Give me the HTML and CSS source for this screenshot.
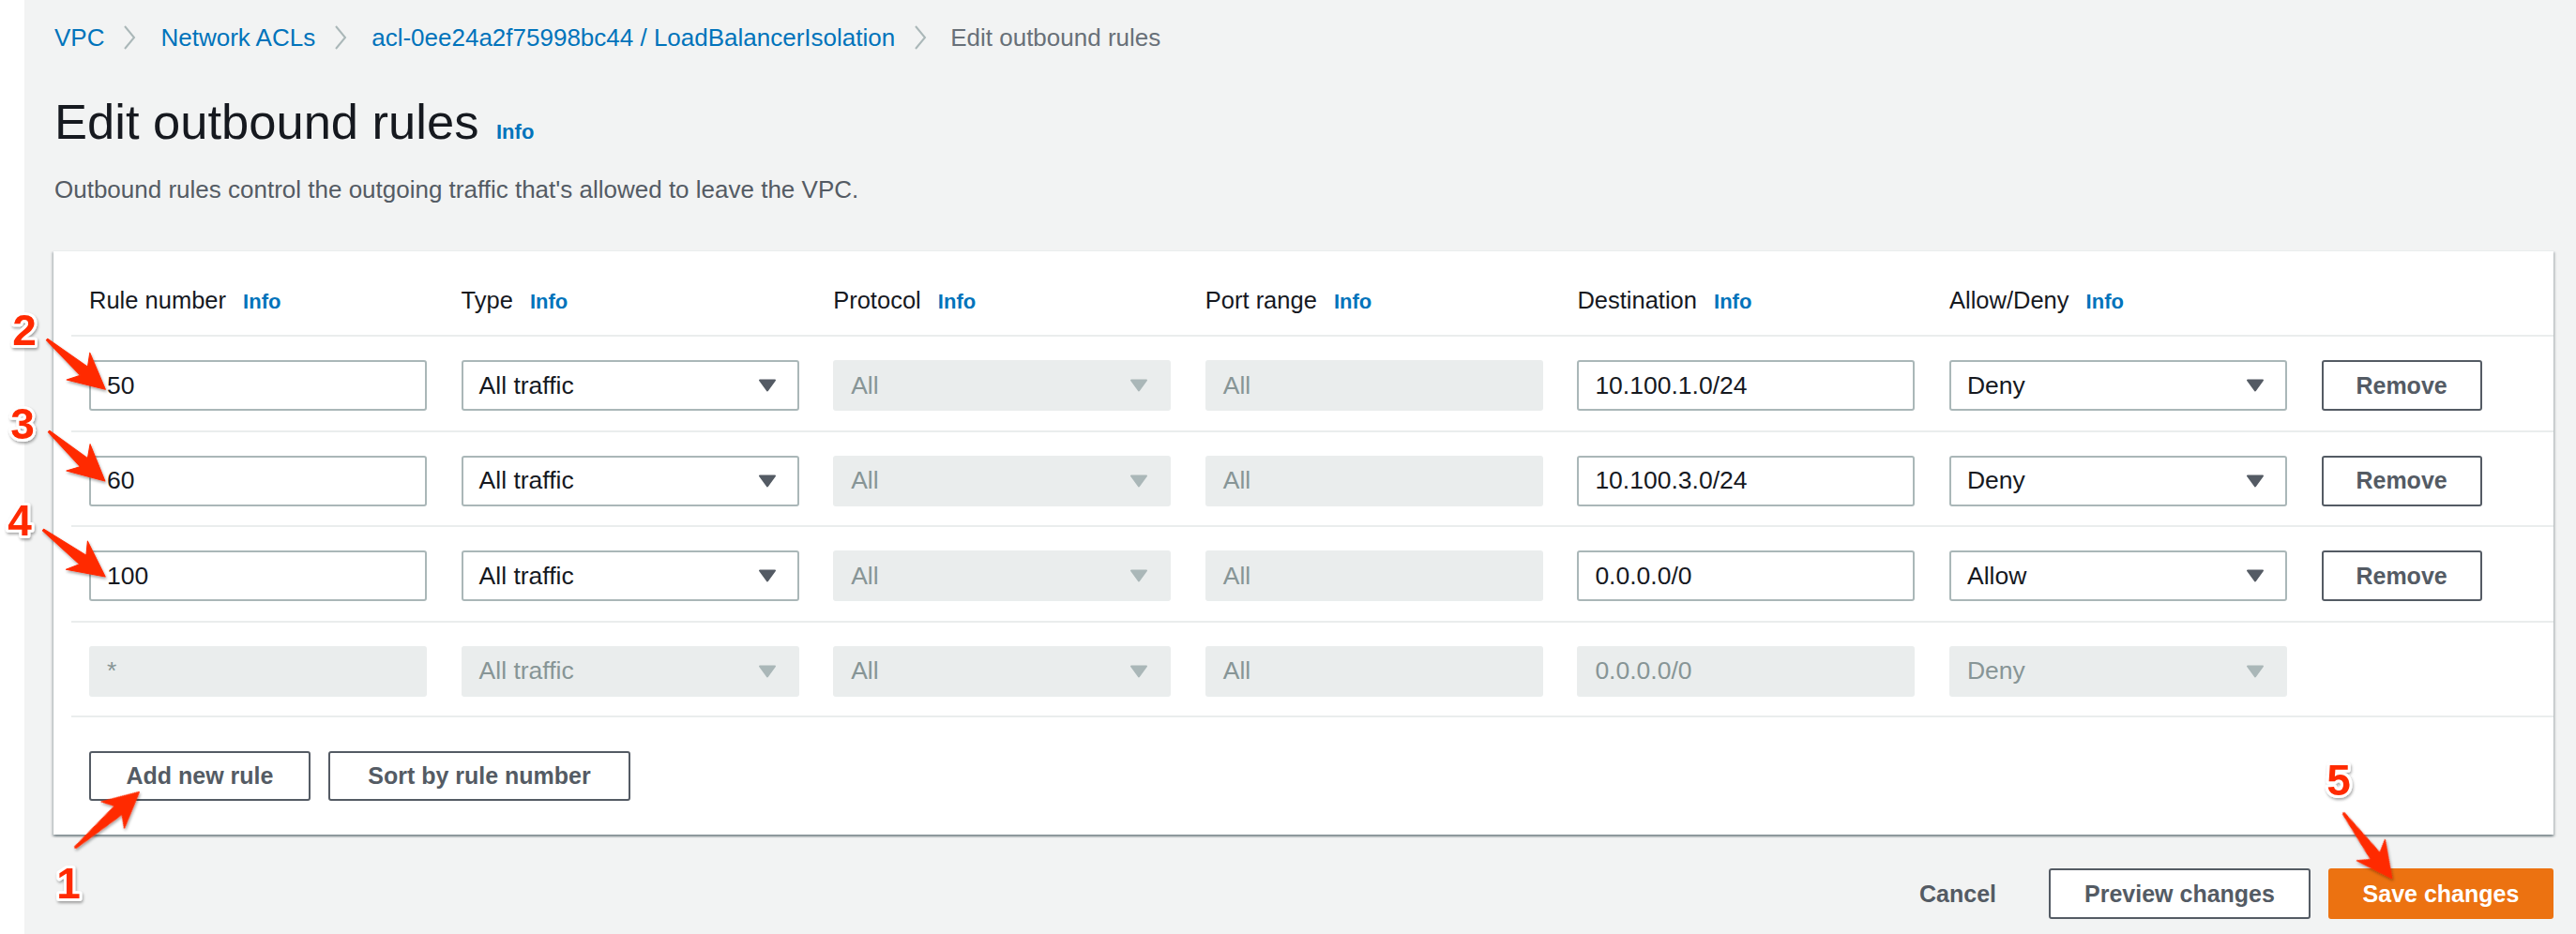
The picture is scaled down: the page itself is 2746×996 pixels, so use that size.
FILE: index.html
```html
<!DOCTYPE html>
<html lang="en">
<head>
<meta charset="utf-8">
<title>Edit outbound rules</title>
<link rel="stylesheet" href="styles.css">
</head>
<body>
<div class="app">
  <div class="nav-strip"></div>
  <main class="main">
    <nav class="breadcrumb">
      <a class="crumb-link">VPC</a>
      <svg class="chev" viewBox="0 0 14 26"><polyline points="2,1 12,13 2,25"/></svg>
      <a class="crumb-link">Network ACLs</a>
      <svg class="chev" viewBox="0 0 14 26"><polyline points="2,1 12,13 2,25"/></svg>
      <a class="crumb-link">acl-0ee24a2f75998bc44 / LoadBalancerIsolation</a>
      <svg class="chev" viewBox="0 0 14 26"><polyline points="2,1 12,13 2,25"/></svg>
      <span class="crumb-current">Edit outbound rules</span>
    </nav>

    <h1 class="page-title">Edit outbound rules <a class="info info-title">Info</a></h1>
    <p class="page-desc">Outbound rules control the outgoing traffic that's allowed to leave the VPC.</p>

    <section class="card">
      <div class="rules">
        <div class="row head-row">
          <div class="label">Rule number <a class="info">Info</a></div>
          <div class="label">Type <a class="info">Info</a></div>
          <div class="label">Protocol <a class="info">Info</a></div>
          <div class="label">Port range <a class="info">Info</a></div>
          <div class="label">Destination <a class="info">Info</a></div>
          <div class="label">Allow/Deny <a class="info">Info</a></div>
          <div></div>
        </div>

        <div class="row">
          <div class="field">50</div>
          <div class="field select">All traffic<svg class="caret" viewBox="0 0 20 14"><path d="M2 1.5 H18 L10 12.5 Z"/></svg></div>
          <div class="field select disabled">All<svg class="caret" viewBox="0 0 20 14"><path d="M2 1.5 H18 L10 12.5 Z"/></svg></div>
          <div class="field disabled">All</div>
          <div class="field">10.100.1.0/24</div>
          <div class="field select">Deny<svg class="caret" viewBox="0 0 20 14"><path d="M2 1.5 H18 L10 12.5 Z"/></svg></div>
          <button class="btn">Remove</button>
        </div>

        <div class="row">
          <div class="field">60</div>
          <div class="field select">All traffic<svg class="caret" viewBox="0 0 20 14"><path d="M2 1.5 H18 L10 12.5 Z"/></svg></div>
          <div class="field select disabled">All<svg class="caret" viewBox="0 0 20 14"><path d="M2 1.5 H18 L10 12.5 Z"/></svg></div>
          <div class="field disabled">All</div>
          <div class="field">10.100.3.0/24</div>
          <div class="field select">Deny<svg class="caret" viewBox="0 0 20 14"><path d="M2 1.5 H18 L10 12.5 Z"/></svg></div>
          <button class="btn">Remove</button>
        </div>

        <div class="row">
          <div class="field">100</div>
          <div class="field select">All traffic<svg class="caret" viewBox="0 0 20 14"><path d="M2 1.5 H18 L10 12.5 Z"/></svg></div>
          <div class="field select disabled">All<svg class="caret" viewBox="0 0 20 14"><path d="M2 1.5 H18 L10 12.5 Z"/></svg></div>
          <div class="field disabled">All</div>
          <div class="field">0.0.0.0/0</div>
          <div class="field select">Allow<svg class="caret" viewBox="0 0 20 14"><path d="M2 1.5 H18 L10 12.5 Z"/></svg></div>
          <button class="btn">Remove</button>
        </div>

        <div class="row">
          <div class="field disabled">*</div>
          <div class="field select disabled">All traffic<svg class="caret" viewBox="0 0 20 14"><path d="M2 1.5 H18 L10 12.5 Z"/></svg></div>
          <div class="field select disabled">All<svg class="caret" viewBox="0 0 20 14"><path d="M2 1.5 H18 L10 12.5 Z"/></svg></div>
          <div class="field disabled">All</div>
          <div class="field disabled">0.0.0.0/0</div>
          <div class="field select disabled">Deny<svg class="caret" viewBox="0 0 20 14"><path d="M2 1.5 H18 L10 12.5 Z"/></svg></div>
          <div></div>
        </div>
      </div>

      <div class="card-actions">
        <button class="btn">Add new rule</button>
        <button class="btn">Sort by rule number</button>
      </div>
    </section>

    <div class="page-actions">
      <button class="btn btn-link">Cancel</button>
      <button class="btn">Preview changes</button>
      <button class="btn btn-primary">Save changes</button>
    </div>
  </main>
</div>

<svg class="annotations" viewBox="0 0 2746 996" width="2746" height="996">
  <defs>
    <filter id="shadow" x="-30%" y="-30%" width="160%" height="160%">
      <feDropShadow dx="1" dy="2" stdDeviation="1.5" flood-color="#000" flood-opacity="0.35"/>
    </filter>
  </defs>
  <g class="arrows" filter="url(#shadow)">
    <polygon transform="translate(50,362) rotate(40.5)" points="0,-1 52,-6 44,-19 82,0 44,19 52,6 0,1"/>
    <polygon transform="translate(52,460) rotate(41.5)" points="0,-1 50,-6 42,-19 80,0 42,19 50,6 0,1"/>
    <polygon transform="translate(46,565) rotate(37.1)" points="0,-1 53,-6 45,-19 83,0 45,19 53,6 0,1"/>
    <polygon transform="translate(80,904) rotate(-41)" points="0,-1 61,-6 53,-19 91,0 53,19 61,6 0,1"/>
    <polygon transform="translate(2498,867) rotate(53.4)" points="0,-1 57,-6 49,-19 87,0 49,19 57,6 0,1"/>
  </g>
  <g class="nums" filter="url(#shadow)">
    <text x="26" y="368">2</text>
    <text x="24" y="468">3</text>
    <text x="21" y="571">4</text>
    <text x="73" y="958">1</text>
    <text x="2493" y="848">5</text>
  </g>
</svg>
</body>
</html>
```

FILE: styles.css
```css
* { box-sizing: border-box; }

html, body {
  margin: 0;
  padding: 0;
  width: 2746px;
  height: 996px;
  overflow: hidden;
}

body {
  background: #f2f3f3;
  font-family: "Liberation Sans", Arial, sans-serif;
  font-size: 25px;
  color: #16191f;
  position: relative;
}

.app {
  display: flex;
  height: 996px;
}

.nav-strip {
  width: 26px;
  flex: 0 0 26px;
  background: #ffffff;
}

.main {
  flex: 1;
  padding: 25px 24px 0 31px;
}

/* Breadcrumb */
.breadcrumb {
  display: flex;
  align-items: center;
  height: 30px;
  font-size: 26px;
  line-height: 30px;
}

.crumb-link {
  color: #0073bb;
  padding-left: 1px;
}

.crumb-current {
  color: #687078;
}

.chev {
  width: 14px;
  height: 26px;
  margin: 0 25px 0 20px;
}

.chev polyline {
  fill: none;
  stroke: #aab7b8;
  stroke-width: 2;
}

/* Heading */
.page-title {
  margin: 45px 0 0 0;
  font-size: 52.5px;
  line-height: 60px;
  font-weight: 400;
  color: #16191f;
  padding-left: 1px;
}

.info {
  color: #0073bb;
  font-weight: 700;
  font-size: 22px;
  line-height: 1;
}

.info-title {
  margin-left: 4px;
}

.page-desc {
  margin: 26px 0 0 0;
  font-size: 26px;
  line-height: 32px;
  color: #545b64;
  padding-left: 1px;
}

/* Card */
.card {
  margin-top: 49px;
  background: #ffffff;
  border-top: 1px solid #eaeded;
  box-shadow: 0 2px 2px 0 rgba(0, 28, 36, 0.3),
              2px 2px 2px 0 rgba(0, 28, 36, 0.15),
              -2px 2px 2px 0 rgba(0, 28, 36, 0.15);
}

.rules {
  padding-left: 19px;
}

.row {
  display: grid;
  grid-template-columns: repeat(6, 360px) 171px;
  column-gap: 36.6px;
  align-items: center;
  padding: 25px 0 20.5px 19px;
  border-bottom: 2px solid #eaeded;
}

.head-row {
  padding: 37px 0 22px 19px;
}

.label {
  line-height: 30px;
  font-size: 25.5px;
  color: #16191f;
  white-space: nowrap;
}

.label .info {
  margin-left: 11px;
}

.field {
  position: relative;
  height: 54px;
  border: 2px solid #aab7b8;
  border-radius: 3px;
  background: #ffffff;
  padding: 0 17px;
  display: flex;
  align-items: center;
  font-size: 26.5px;
  color: #16191f;
  white-space: nowrap;
}

.field.select {
  justify-content: space-between;
  padding-right: 22px;
}

.field.disabled {
  background: #eaeded;
  border-color: #eaeded;
  color: #879596;
}

.caret {
  width: 20px;
  height: 14px;
}

.caret path {
  fill: #545b64;
  stroke: #545b64;
  stroke-width: 2;
  stroke-linejoin: round;
}

.disabled .caret path {
  fill: #aab7b8;
  stroke: #aab7b8;
}

/* Buttons */
.btn {
  height: 54px;
  padding: 0 35px;
  border: 2px solid #545b64;
  border-radius: 3px;
  background: #ffffff;
  color: #545b64;
  font-family: "Liberation Sans", Arial, sans-serif;
  font-weight: 700;
  font-size: 25px;
  white-space: nowrap;
  cursor: pointer;
}

.row .btn {
  width: 171px;
  padding: 0;
}

.card-actions {
  display: flex;
  gap: 19px;
  padding: 36px 0 36px 38px;
}

.card-actions .btn {
  height: 53px;
}

.card-actions .btn:first-child {
  width: 236px;
  padding: 0;
}

.card-actions .btn:nth-child(2) {
  width: 322px;
  padding: 0;
}

.page-actions {
  display: flex;
  justify-content: flex-end;
  align-items: center;
  gap: 19px;
  margin-top: 36px;
}

.btn-link {
  border-color: transparent;
  background: transparent;
  padding: 0 35px;
}

.page-actions .btn:nth-child(2) {
  width: 279px;
  padding: 0;
}

.btn-primary {
  width: 240px;
  padding: 0;
  background: #ec7211;
  border-color: #ec7211;
  color: #ffffff;
}

/* Annotation overlay */
.annotations {
  position: absolute;
  top: 0;
  left: 0;
  pointer-events: none;
}

.arrows polygon {
  fill: #ff2a00;
  stroke: #ff2a00;
  stroke-width: 1;
  stroke-linejoin: round;
}

.nums text {
  font-family: "Liberation Sans", Arial, sans-serif;
  font-weight: 700;
  font-size: 46px;
  text-anchor: middle;
  fill: #ff2a00;
  stroke: #ffffff;
  stroke-width: 6px;
  stroke-linejoin: round;
  paint-order: stroke;
}
```
